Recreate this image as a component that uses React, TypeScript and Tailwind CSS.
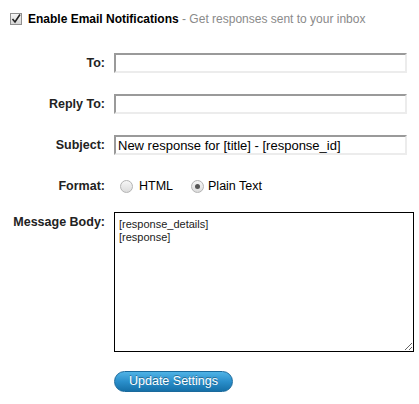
import React from "react";

const labelCls =
  "w-[105px] shrink-0 text-right text-[12.5px] font-bold text-[#222]";

const inputCls =
  "w-[293px] h-[20px] bg-white border-2 border-t-[#9a9a9a] border-l-[#9a9a9a] border-b-[#ececec] border-r-[#ececec] px-[2px] text-[13px] text-black outline-none";

function Radio({ checked }: { checked?: boolean }) {
  return (
    <span className="w-[13px] h-[13px] rounded-full border border-[#b4b4b4] bg-gradient-to-b from-[#f6f6f6] to-[#dcdcdc] flex items-center justify-center shrink-0">
      {checked && <span className="w-[5px] h-[5px] rounded-full bg-[#555]" />}
    </span>
  );
}

export default function App() {
  return (
    <div
      className="w-[419px] h-[404px] bg-white text-[#222]"
      style={{ fontFamily: '"Liberation Sans", Arial, sans-serif' }}
    >
      {/* Header */}
      <div className="flex items-center gap-[6px] pl-[10px] pt-[10px]">
        <span className="w-[12px] h-[12px] border border-[#8f8f8f] bg-gradient-to-b from-[#f6f6f6] to-[#d6d6d6] flex items-center justify-center">
          <svg width="10" height="10" viewBox="0 0 10 10">
            <path d="M1.5 5 L4 8 L9 0.5" stroke="#222" strokeWidth="1.6" fill="none" />
          </svg>
        </span>
        <span className="text-[12px]">
          <span className="font-bold text-black">Enable Email Notifications</span>
          <span className="text-[#8a8a8a]"> - Get responses sent to your inbox</span>
        </span>
      </div>

      <div className="flex flex-col mt-[25px]">
        <div className="flex items-center gap-[9px] h-[20px]">
          <div className={labelCls}>To:</div>
          <input className={inputCls} defaultValue="" />
        </div>
        <div className="flex items-center gap-[9px] h-[20px] mt-[21px]">
          <div className={labelCls}>Reply To:</div>
          <input className={inputCls} defaultValue="" />
        </div>
        <div className="flex items-center gap-[9px] h-[20px] mt-[21px]">
          <div className={labelCls}>Subject:</div>
          <input
            className={inputCls}
            defaultValue="New response for [title] - [response_id]"
          />
        </div>
        <div className="flex items-center gap-[9px] h-[20px] mt-[21px]">
          <div className={labelCls}>Format:</div>
          <div className="flex items-center text-[12.5px] text-black pl-[6px]">
            <Radio />
            <span className="ml-[6px]">HTML</span>
            <span className="ml-[18px]"><Radio checked /></span>
            <span className="ml-[4px]">Plain Text</span>
          </div>
        </div>
        <div className="flex items-start gap-[9px] mt-[16px]">
          <div className={labelCls + " pt-[1px]"}>Message Body:</div>
          <textarea
            className="w-[300px] h-[140px] border border-black px-[4px] pt-[5px] text-[11px] leading-[13px] text-[#222] outline-none"
            defaultValue={"[response_details]\n[response]"}
          />
        </div>
        <div className="pl-[114px] mt-[16px]">
          <button className="w-[119px] h-[21px] rounded-full bg-gradient-to-b from-[#4fb3e6] via-[#2a8fcb] to-[#1570a8] border border-[#1b6a9c] text-white text-[12.5px] leading-none [text-shadow:0_-1px_0_rgba(0,0,0,0.35)]">
            Update Settings
          </button>
        </div>
      </div>
    </div>
  );
}
